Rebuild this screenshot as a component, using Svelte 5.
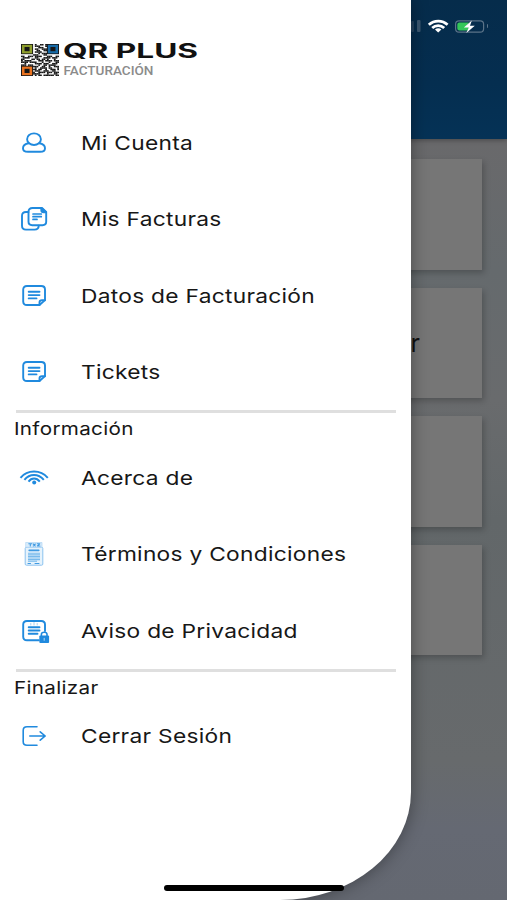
<script>
  const account = [
    { icon: 'user', label: 'Mi Cuenta' },
    { icon: 'copies', label: 'Mis Facturas' },
    { icon: 'note', label: 'Datos de Facturación' },
    { icon: 'note', label: 'Tickets' }
  ];
  const info = [
    { icon: 'wifi', label: 'Acerca de' },
    { icon: 'terms', label: 'Términos y Condiciones' },
    { icon: 'privacy', label: 'Aviso de Privacidad' }
  ];
  const finish = [{ icon: 'logout', label: 'Cerrar Sesión' }];

  const qrRows = [
    '0000000010011010000000',
    '0000000011100010000000',
    '0000000000111000000000',
    '0000000011001110000000',
    '0000000001100110000000',
    '0000000011110000000000',
    '0000000000101110000000',
    '0000000111000110000000',
    '1100111011110001110011',
    '0111100011000111101110',
    '1100001101101101000100',
    '1011110000111011110111',
    '1111011110001000100011',
    '0010000011110111001110',
    '1110111000100110111100',
    '0000000111001100100111',
    '0000000010011110110001',
    '0000000110110010011101',
    '0000000011100111001100',
    '0000000100111101110111',
    '0000000111100001000110',
    '0000000010110111111011'
  ];
  const modules = qrRows.flatMap((row, y) =>
    [...row].map((c, x) => ({ x, y, on: c === '1' })).filter((m) => m.on)
  );
  const finders = [
    { x: 0, y: 0, color: '#8f9f2d' },
    { x: 15, y: 0, color: '#176ba8' },
    { x: 0, y: 15, color: '#ea7320' }
  ];
</script>

{#snippet glyph(name)}
  <svg class="icon" class:soft={name === 'terms'} width="34" height="32" viewBox="0 0 34 32" fill="none" stroke="#208ade" stroke-width="1.9" stroke-linecap="round" stroke-linejoin="round">
    {#if name === 'user'}
      <ellipse cx="17" cy="12.2" rx="6.9" ry="5.8" />
      <path d="M11.8 16.2C8 16.8 6 18.6 6 21.2C6 23.8 8 24.8 11 24.8H23.2C26.2 24.8 28 23.7 28 21.2C28 18.6 26 16.8 22.2 16.2" />
    {:else if name === 'copies'}
      <path d="M11.5 9H9Q5 9 5 12.8V22.8Q5 26.6 9 26.6H17.5Q21.7 26.6 21.7 22.8" />
      <path d="M15.5 5H25L29.2 9V18.8Q29.2 22.2 25.5 22.2H15.2Q11.5 22.2 11.5 18.8V8.5Q11.5 5 15.5 5Z" />
      <path fill="#208ade" d="M24.3 5V7.2Q24.3 9.2 26.6 9.2H29Z" />
      <path d="M16 11H24.3M16 13.7H24.3M16 16.4H20" stroke-width="1.7" />
    {:else if name === 'note'}
      <path d="M10 6H24.2Q28 6 28 9.5V20.1L22.5 25H10Q6.2 25 6.2 21.5V9.5Q6.2 6 10 6Z" />
      <path d="M22.5 25V22.5Q22.5 20.2 25 20.2H28" />
      <path d="M11.7 11.8H22.5M11.7 15.1H22.5M11.7 18.4H19.5" />
    {:else if name === 'wifi'}
      <g stroke-width="2" stroke-linecap="butt">
        <path d="M3.5 15.8C10.5 7.4 23.5 7.4 30.8 15.8" />
        <path d="M7.4 17.8C12.6 11.3 21.4 11.3 26.8 17.8" />
        <path d="M11.5 19.6C14.6 15.5 19.5 15.5 22.8 19.6" />
      </g>
      <circle cx="17.2" cy="20.6" r="2" fill="#208ade" stroke="none" />
    {:else if name === 'terms'}
      <rect x="8.2" y="9.2" width="17.6" height="18" rx="1.2" fill="#e2f1fc" stroke="#79b9ee" stroke-width="1" />
      <rect x="9" y="4.5" width="16" height="4.7" fill="#d3e9fa" stroke="#a5d0f4" stroke-width=".7" />
      <path d="M11.8 5.8H14.8M13.3 5.8V8M16.3 8L18.3 6M16.3 6L18.3 8M20.2 5.8H22.8L20.4 8H23" stroke-width="1.1" />
      <path d="M12.2 12.4H21.8" stroke-width="1.6" />
      <path d="M11 15.2H23M11 16.8H23M11 18.4H23M11 20H23M11 21.6H23M11 23.2H20" stroke="#62afe9" stroke-width="1.1" stroke-linecap="butt" />
      <path d="M11 25.5H13.5M18 25.5H22" stroke-width="1" />
    {:else if name === 'privacy'}
      <path d="M21.8 25.3H10Q6.2 25.3 6.2 21.8V9.6Q6.2 6 10 6H24.2Q28 6 28 9.6V16" />
      <path d="M13.8 8.5V10M17 7.5V10M20.2 8.5V10" stroke-width=".8" stroke="#8fc5ef" />
      <path d="M11.7 12.2H22.5M11.7 15.5H22.5M11.7 18.8H20.5" />
      <rect x="22.3" y="20.5" width="9.8" height="7.5" rx="1" fill="#208ade" stroke="none" />
      <path d="M24.4 21V19.3Q24.4 17.2 27.2 17.2Q30 17.2 30 19.3V21" stroke-width="1.6" />
      <path d="M27.2 23.4V25.2" stroke="#a4d2f5" stroke-width="1.1" />
    {:else}
      <path d="M20 6.8H10Q6.2 6.8 6.2 10.4V21.8Q6.2 25.3 10 25.3H20" stroke-width="1.6" />
      <path d="M12.8 16H28M23.2 11.8L28.2 16L23.2 20.2" stroke-width="1.6" />
    {/if}
  </svg>
{/snippet}

{#snippet list(items)}
  <ul>
    {#each items as item}
      <li>
        {@render glyph(item.icon)}
        <span class="label">{item.label}</span>
      </li>
    {/each}
  </ul>
{/snippet}

<div class="screen">
  <div class="page">
    <header class="appbar">
      <div class="status">
        <svg width="72" height="20" viewBox="0 0 72 20">
          <rect x="0" y="5" width="3" height="11" rx="1" fill="#24425f" />
          <rect x="6" y="4" width="3.5" height="12" rx="1" fill="#3c5871" />
          <g fill="none" stroke="#fff" stroke-width="2.7">
            <path d="M17.8 8.8C23.2 3.8 31.3 3.8 36.6 8.8" />
            <path d="M21.2 12C24.6 8.7 29.8 8.7 33.2 12" />
          </g>
          <path d="M24 13.5Q27.2 11 30.4 13.5L27.2 16.4Z" fill="#fff" />
          <rect x="44.6" y="4.9" width="28" height="11.3" rx="3.4" fill="none" stroke="#5b7388" stroke-width="1.2" />
          <path d="M48.5 6.5H58L54.5 11H58L56.5 14.6H48.5Q46.3 14.6 46.3 12.5V8.6Q46.3 6.5 48.5 6.5Z" fill="#35c759" />
          <path d="M60.8 4.4L52.9 11.6H57.7L55.3 17.1L63.8 9.8H59Z" fill="#fff" />
        </svg>
        <span class="cap"></span>
      </div>
    </header>
    <div class="cards">
      <div class="card"></div>
      <div class="card"><span>r</span></div>
      <div class="card"></div>
      <div class="card"></div>
    </div>
  </div>

  <nav class="drawer">
    <div class="brand">
      <svg class="qr" width="38" height="32" viewBox="0 0 22 22" preserveAspectRatio="none">
        {#each modules as m}
          <rect x={m.x} y={m.y} width="1.05" height="1.05" fill="#171717" />
        {/each}
        {#each finders as f}
          <rect x={f.x} y={f.y} width="7" height="7" fill="#171717" />
          <rect x={f.x + 1.3} y={f.y + 1.3} width="4.4" height="4.4" fill="none" stroke={f.color} stroke-width="1.5" />
        {/each}
      </svg>
      <svg class="wordmark" width="140" height="38" viewBox="0 0 140 38">
        <text x="-1" y="18.4" class="name" textLength="135" lengthAdjust="spacingAndGlyphs">QR PLUS</text>
        <text x="-0.5" y="35" class="sub" textLength="90" lengthAdjust="spacingAndGlyphs">FACTURACIÓN</text>
      </svg>
    </div>
    {@render list(account)}
    <section>
      <h2><span>Información</span></h2>
      {@render list(info)}
    </section>
    <section>
      <h2><span>Finalizar</span></h2>
      {@render list(finish)}
    </section>
  </nav>
  <div class="home"></div>
</div>

<style>
  .screen {
    position: relative;
    width: 507px;
    height: 900px;
    overflow: hidden;
    font-family: Inter, "Liberation Sans", sans-serif;
    color: #171717;
  }
  .page {
    height: 900px;
    background: linear-gradient(180deg, #69696b 140px, #656a6d 270px, #696b6d 400px, #626769 520px, #676a6c 760px, #656973 830px, #646871 900px);
  }
  .appbar {
    box-sizing: border-box;
    height: 139px;
    padding: 16px 19px 0 0;
    background: linear-gradient(#062c4b, #052e50 60%, #053256);
    box-shadow: 0 1px 5px rgba(0, 0, 0, .35);
  }
  .status {
    display: flex;
    align-items: center;
    justify-content: flex-end;
    gap: 1.5px;
  }
  .status svg { overflow: visible; }
  .cap {
    width: 1.5px;
    height: 4px;
    border-radius: 0 2px 2px 0;
    background: #5b7388;
    margin-left: 2px;
  }
  .cards {
    display: flex;
    flex-direction: column;
    align-items: flex-end;
    gap: 18px;
    padding: 20px 25px 0 0;
  }
  .card {
    display: flex;
    box-sizing: border-box;
    width: 457px;
    height: 110.6px;
    align-items: center;
    justify-content: flex-end;
    padding-right: 62px;
    background: #767676;
    box-shadow: 2px 3px 6px rgba(0, 0, 0, .22);
    font-size: 25px;
    color: #111;
  }
  .drawer {
    position: absolute;
    inset: 0 auto 0 0;
    width: 411px;
    background: #fff;
    border-radius: 0 0 131px 0 / 0 0 108px 0;
    box-shadow: 0 0 17px rgba(0, 0, 0, .38);
  }
  .brand {
    display: flex;
    box-sizing: border-box;
    height: 105px;
    padding: 43.5px 0 0 21px;
    gap: 5px;
  }
  .wordmark { margin-top: -3.5px; overflow: visible; }
  .name { font: 700 19.5px Inter, sans-serif; fill: #111; }
  .sub { font: 500 13px Roboto, sans-serif; fill: #8b8b8b; }
  ul { list-style: none; margin: 0; padding: 0; }
  li {
    display: flex;
    align-items: center;
    height: 76.3px;
    padding-left: 17px;
    gap: 30px;
  }
  .icon { flex: none; }
  .soft { opacity: .85; }
  .label {
    font-size: 19.3px;
    letter-spacing: .23px;
    white-space: nowrap;
    transform: scaleX(1.18);
    transform-origin: left;
  }
  h2 {
    box-sizing: border-box;
    height: 29.6px;
    margin: 0 15px 0 16px;
    border-top: 3px solid #dfdfdf;
    font-weight: 400;
    font-size: 17.5px;
    line-height: 31px;
    letter-spacing: .26px;
  }
  h2 span {
    display: inline-block;
    transform: scaleX(1.18);
    transform-origin: left;
    margin-left: -2px;
  }
  .home {
    position: absolute;
    left: 164px;
    top: 885px;
    width: 180px;
    height: 6px;
    border-radius: 3px;
    background: #000;
  }
</style>
